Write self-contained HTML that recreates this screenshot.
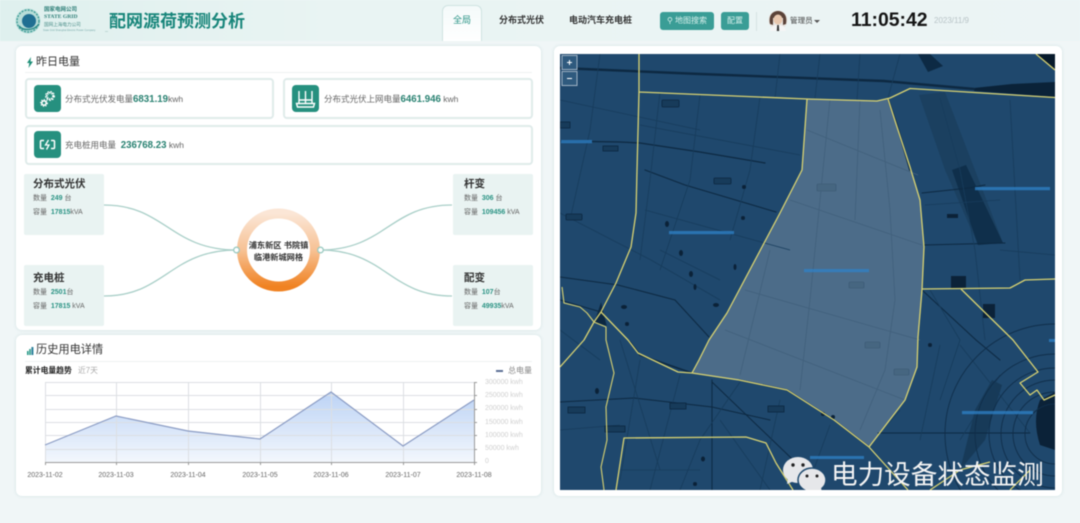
<!DOCTYPE html>
<html lang="zh"><head><meta charset="utf-8"><title>配网源荷预测分析</title>
<style>
*{box-sizing:border-box;margin:0;padding:0}
html,body{width:1080px;height:523px;overflow:hidden;background:#f0f6f7}
body{position:relative;font-family:"Liberation Sans","Noto Sans CJK SC",sans-serif;color:#333}
#root{position:absolute;inset:0;filter:blur(.45px)}
.a{position:absolute;white-space:nowrap;line-height:1}
.head{position:absolute;left:0;top:0;width:1080px;height:41px;background:linear-gradient(90deg,#dff0ee 0,#e9f4f3 30%,#ecf4f5 100%)}
.panel{position:absolute;background:#fff;border-radius:6px;box-shadow:0 0 3px rgba(150,190,190,.35)}
.card{position:absolute;background:#fff;border:2px solid #dfebea;border-radius:4px}
.ico{position:absolute;width:27px;height:27px;background:#26907f;border-radius:4px}
.txt{font-size:8.5px;color:#666}
.num{color:#2a8272;font-weight:700;font-size:9.7px}
.box{position:absolute;width:80px;height:61px;background:#e9f3f2;border-radius:2px}
.bt{font-size:10.5px;font-weight:700;color:#333}
.sm{font-size:7px;color:#666}
.sm b{color:#2b9384}
.btn{position:absolute;top:12px;height:18px;background:#3a9d96;border-radius:3px;color:#d8f0ec;font-size:8px;line-height:18px;text-align:center}
.yl{font-size:7px;color:#d0d0d0;left:485px}
.xl{font-size:7px;color:#666;top:472px;width:50px;text-align:center}
</style></head><body><div id="root">
<div class="head"></div>

<!-- logo -->
<svg class="a" style="left:14px;top:6px" width="30" height="30" viewBox="0 0 30 30">
<circle cx="14" cy="15" r="12.5" fill="#a5d4cf" opacity=".7"/>
<circle cx="14" cy="15" r="11" fill="none" stroke="#3f9d98" stroke-width="1.400" stroke-dasharray="2 1.200"/>
<circle cx="15" cy="15" r="7" fill="#1f6f92"/>
<path d="M5 20C9 25 20 25 25 18" fill="none" stroke="#2a8a88" stroke-width="1.500"/>
</svg>
<div class="a" style="left:44px;top:8px;font-size:5.500px;font-weight:700;color:#2e7f78">国家电网公司</div>
<div class="a" style="left:44px;top:15px;font-size:5.600px;font-weight:700;font-family:'Liberation Serif',serif;color:#2e7f78">STATE GRID</div>
<div class="a" style="left:44px;top:23px;font-size:4.600px;color:#4d8f8a">国网上海电力公司</div>
<div class="a" style="left:43px;top:30px;font-size:2.600px;color:#7aa">State Grid Shanghai Electric Power Company</div>
<div class="a" style="left:105px;top:31px;width:3px;height:1px;background:#bfd8d5"></div>
<div class="a" style="left:109px;top:13px;font-size:17px;font-weight:700;color:#17857a">配网源荷预测分析</div>

<!-- nav -->
<div class="a" style="left:442px;top:5px;width:40px;height:36px;background:linear-gradient(#f4fafa,#fff);border:1px solid #cfe3e1;border-bottom:0;border-radius:6px 6px 0 0"></div>
<div class="a" style="left:453px;top:16px;font-size:9px;color:#2a9486">全局</div>
<div class="a" style="left:499px;top:16px;font-size:9px;font-weight:700;color:#333">分布式光伏</div>
<div class="a" style="left:569px;top:16px;font-size:9px;font-weight:700;color:#333">电动汽车充电桩</div>
<div class="btn" style="left:660px;width:54px">⚲ 地图搜索</div>
<div class="btn" style="left:721px;width:28px">配置</div>
<div class="a" style="left:756px;top:12px;width:1px;height:19px;background:#d5e3e3"></div>
<svg class="a" style="left:768px;top:10px" width="20" height="22" viewBox="0 0 20 22">
<circle cx="10" cy="10" r="9.500" fill="#e9e4e0"/>
<path d="M2 14C0 4 6 1 10 1s10 3 8 13l-3 1V8H5v7z" fill="#5a4238"/>
<ellipse cx="10" cy="9.500" rx="4.500" ry="5" fill="#e8c7ae"/>
<path d="M2 21c1-5 4-6 8-6s7 1 8 6z" fill="#f5f5f5"/>
<path d="M9.200 15h1.600l.4 6H8.800z" fill="#333"/>
</svg>
<div class="a" style="left:790px;top:17px;font-size:7.600px;color:#444">管理员</div>
<div class="a" style="left:814px;top:20px;border:3px solid transparent;border-top:3px solid #555"></div>
<div class="a" style="left:851px;top:11px;font-size:19.400px;font-weight:700;color:#151515">11:05:42</div>
<div class="a" style="left:934px;top:17px;font-size:8px;color:#b8c4c6">2023/11/9</div>

<!-- panel 1 -->
<div class="panel" style="left:16px;top:46px;width:525px;height:284px"></div>
<svg class="a" style="left:27px;top:57px" width="6" height="11" viewBox="0 0 6 11"><path d="M4 0L0 6h2.300L1.500 11 6 4.500H3.500z" fill="#1f8f78"/></svg>
<div class="a" style="left:36px;top:57px;font-size:11px;color:#333">昨日电量</div>
<div class="a" style="left:25px;top:72px;width:507px;height:1px;background:#eef2f2"></div>

<div class="card" style="left:25px;top:78px;width:249px;height:41px"></div>
<div class="ico" style="left:34px;top:85px"></div>
<svg class="a" style="left:34px;top:85px" width="27" height="27" viewBox="0 0 27 27" fill="none" stroke="#fff">
<circle cx="16" cy="11" r="3.200" stroke-width="2" stroke-dasharray="1.500 .8"/><circle cx="16" cy="11" r="4.400" stroke-width="1.200" stroke-dasharray="1.500 1.500"/>
<circle cx="10" cy="18" r="2.200" stroke-width="1.600"/><circle cx="10" cy="18" r="3.400" stroke-width="1" stroke-dasharray="1.300 1.300"/>
</svg>
<div class="a txt" style="left:65px;top:95px">分布式光伏发电量<span class="num">6831.19</span>kwh</div>

<div class="card" style="left:283px;top:78px;width:250px;height:41px"></div>
<div class="ico" style="left:292px;top:85px"></div>
<svg class="a" style="left:292px;top:85px" width="27" height="27" viewBox="0 0 27 27" fill="none" stroke="#fff" stroke-width="1.400">
<path d="M7 6v12M13.500 6v12M20 6v12M7 15h13M4.500 18.500h18l-1 3.500h-16z"/>
</svg>
<div class="a txt" style="left:324px;top:95px">分布式光伏上网电量<span class="num">6461.946</span> kwh</div>

<div class="card" style="left:25px;top:125px;width:508px;height:40px"></div>
<div class="ico" style="left:34px;top:131px"></div>
<svg class="a" style="left:34px;top:131px" width="27" height="27" viewBox="0 0 27 27" fill="none" stroke="#fff" stroke-width="1.500">
<path d="M10 9.500H7.500q-1 0-1 1v6q0 1 1 1H10M17 9.500h2.500q1 0 1 1v6q0 1-1 1H17"/><path d="M14.500 9l-3 5h3.500l-2.500 4.500" stroke-width="1.300"/>
</svg>
<div class="a txt" style="left:65px;top:141px">充电桩用电量 &nbsp;<span class="num">236768.23</span> kwh</div>

<!-- mind map -->
<svg class="a" style="left:100px;top:170px" width="360" height="160" viewBox="100 170 360 160" fill="none">
<defs><linearGradient id="ring" x1="0" y1="0" x2="0" y2="1"><stop offset="0" stop-color="#fbe6d6"/><stop offset=".5" stop-color="#f7c295"/><stop offset="1" stop-color="#f08222"/></linearGradient></defs>
<g stroke="#a9cfc8" stroke-width="1.300">
<path d="M104 205C165 205 170 250 237 250"/>
<path d="M104 296C165 296 170 250 237 250"/>
<path d="M452 205C390 205 385 250 320 250"/>
<path d="M452 296C390 296 385 250 320 250"/>
</g>
<circle cx="278.500" cy="250" r="36.500" stroke="url(#ring)" stroke-width="10"/>
<circle cx="236.500" cy="250" r="2.800" fill="#fff" stroke="#9ccbc2" stroke-width="1.300"/>
<circle cx="320.500" cy="250" r="2.800" fill="#fff" stroke="#9ccbc2" stroke-width="1.300"/>
</svg>
<div class="a" style="left:238px;top:242px;width:81px;text-align:center;font-size:8.200px;font-weight:700;color:#333">浦东新区 书院镇</div>
<div class="a" style="left:238px;top:254px;width:81px;text-align:center;font-size:8.200px;font-weight:700;color:#333">临港新城网格</div>

<div class="box" style="left:24px;top:174px"></div>
<div class="a bt" style="left:33px;top:179px">分布式光伏</div>
<div class="a sm" style="left:33px;top:195px">数量 &nbsp;<b>249</b> 台</div>
<div class="a sm" style="left:33px;top:209px">容量 &nbsp;<b>17815</b>kVA</div>

<div class="box" style="left:24px;top:265px"></div>
<div class="a bt" style="left:33px;top:273px">充电桩</div>
<div class="a sm" style="left:33px;top:289px">数量 &nbsp;<b>2501</b>台</div>
<div class="a sm" style="left:33px;top:303px">容量 &nbsp;<b>17815</b> kVA</div>

<div class="box" style="left:453px;top:174px"></div>
<div class="a bt" style="left:464px;top:179px">杆变</div>
<div class="a sm" style="left:464px;top:195px">数量 &nbsp;<b>306</b> 台</div>
<div class="a sm" style="left:464px;top:209px">容量 &nbsp;<b>109456</b> kVA</div>

<div class="box" style="left:453px;top:265px"></div>
<div class="a bt" style="left:464px;top:273px">配变</div>
<div class="a sm" style="left:464px;top:289px">数量 &nbsp;<b>107</b>台</div>
<div class="a sm" style="left:464px;top:303px">容量 &nbsp;<b>49935</b>kVA</div>

<!-- panel 2 -->
<div class="panel" style="left:16px;top:335px;width:525px;height:161px"></div>
<svg class="a" style="left:27px;top:347px" width="7" height="8"><rect x="0" y="4" width="1.600" height="4" fill="#2a9a88"/><rect x="2.200" y="2" width="1.600" height="6" fill="#2a9a88"/><rect x="4.400" y="0" width="2" height="8" fill="#2a7f9a"/></svg>
<div class="a" style="left:36px;top:345px;font-size:11.200px;color:#333">历史用电详情</div>
<div class="a" style="left:25px;top:361px;width:507px;height:1px;background:#eef2f2"></div>
<div class="a" style="left:25px;top:367px;font-size:7.800px;font-weight:700;color:#222">累计电量趋势</div>
<div class="a" style="left:78px;top:367px;font-size:7.800px;color:#aaa">近7天</div>
<div class="a" style="left:496px;top:370px;width:7px;height:1.500px;background:#5b6f95"></div>
<div class="a" style="left:508px;top:367px;font-size:8px;color:#888">总电量</div>

<svg class="a" style="left:40px;top:378px" width="445" height="90" viewBox="40 378 445 90" fill="none">
<defs><linearGradient id="ar" x1="0" y1="0" x2="0" y2="1"><stop offset="0" stop-color="#bcd3f5"/><stop offset="1" stop-color="#f3f7fd"/></linearGradient></defs>
<path d="M45 445L116 416L188 431L260 439L331 392L403 446L474 400V462H45Z" fill="url(#ar)"/>
<g stroke="#dcdfe3" stroke-width="1">
<path d="M45 382.500H474M45 395.500H474M45 409.500H474M45 422.500H474M45 435.500H474M45 449.500H474"/>
<path d="M45.500 382V462M116.500 382V462M188.500 382V462M260.500 382V462M331.500 382V462M403.500 382V462"/>
</g>
<path d="M45 445L116 416L188 431L260 439L331 392L403 446L474 400" stroke="#8b9cc4" stroke-width="1.200"/>
<path d="M45 462.500H474M474.500 382V463" stroke="#9a9a9a" stroke-width="1"/>
<path d="M45.500 462v3M116.500 462v3M188.500 462v3M260.500 462v3M331.500 462v3M403.500 462v3M474.500 462v3M474 382.500h3M474 395.500h3M474 409.500h3M474 422.500h3M474 435.500h3M474 449.500h3M474 462.500h3" stroke="#9a9a9a"/>
</svg>
<div class="a yl" style="top:379px">300000 kwh</div>
<div class="a yl" style="top:392px">250000 kwh</div>
<div class="a yl" style="top:405px">200000 kwh</div>
<div class="a yl" style="top:419px">150000 kwh</div>
<div class="a yl" style="top:432px">100000 kwh</div>
<div class="a yl" style="top:445px">50000 kwh</div>
<div class="a yl" style="top:458px">0</div>
<div class="a xl" style="left:20px">2023-11-02</div>
<div class="a xl" style="left:91px">2023-11-03</div>
<div class="a xl" style="left:163px">2023-11-04</div>
<div class="a xl" style="left:235px">2023-11-05</div>
<div class="a xl" style="left:306px">2023-11-06</div>
<div class="a xl" style="left:378px">2023-11-07</div>
<div class="a xl" style="left:449px">2023-11-08</div>

<!-- map panel -->
<div class="panel" style="left:554px;top:46px;width:508px;height:450px"></div>
<svg class="a" style="left:560px;top:54px" width="495" height="436" viewBox="560 54 495 436" fill="none">
<rect x="560" y="54" width="495" height="436" fill="#1f486d"/>
<!-- water bands -->
<path d="M919 95L945 92L1003 243L978 245L945 170Z" fill="#1b4060"/>
<path d="M952 170L966 165L1003 243L978 245Z" fill="#0f2f4b"/>
<path d="M1036 54L1055 54L1055 70Z" fill="#071a2b"/>
<path d="M918 54L930 54L943 66L928 72Z" fill="#0d2a44"/>
<path d="M974 88L1012 84L1055 82V97L974 91Z" fill="#0a2238"/>
<path d="M1040 400L1055 392V450L1040 445Q1032 420 1040 400Z" fill="#0b2238"/>
<path d="M975 410L992 380L1002 385L985 440L960 470Z" fill="#173a58"/>
<!-- highlighted -->
<path d="M807 99L877 101L888 99L910 167L920 200L924 247L922 290L918 337L917 367L905 400L869 447L864 443L834 420L787 390L739 380L692 373L699 360L709 340L727 313L780 213L802 170Z" fill="#4c6c89"/>
<!-- main roads -->
<g stroke="#0d2942" stroke-linecap="round">
<path d="M560 68L700 74L884 81L974 89" stroke-width="2.400"/>
<path d="M561 141L620 142L640 143L700 152L765 163" stroke-width="1.200"/>
<path d="M645 170L685 185L776 212" stroke-width="1.100"/>
<path d="M922 193L969 188L985 185" stroke-width="1"/>
<path d="M924 245L1005 243" stroke-width="1"/>
<path d="M888 99L897 125L910 170" stroke-width="1.800"/>
<path d="M560 277L618 285L675 300L709 337" stroke-width="1"/>
<path d="M560 402L634 398L712 407L770 420" stroke-width="1"/>
<path d="M712 380V490M712 382L814 480" stroke-width="1"/>
<path d="M922 290L976 340L1000 360" stroke-width="1.100"/>
<path d="M878 433H1030" stroke-width="1"/>
<path d="M601 312L560 300" stroke-width="1"/>
<path d="M595 322L601 304L606 325Z" fill="#0c2740"/>
<path d="M692 373L640 355L630 342" stroke-width="1.700"/>
<path d="M739 380L787 390L834 420L869 447" stroke-width="1.600"/>
</g>
<!-- minor -->
<g stroke="#173c5c" stroke-width=".8">
<path d="M560 100L700 130M560 213L651 260L720 300M600 54L590 130L570 220M660 92L650 180L640 260M700 95L690 180L660 270M760 97L750 170L730 240M640 125L800 155M645 210L790 250M660 250L720 280"/>
<path d="M780 54L775 98M860 54L857 100M820 54L815 98M900 54L888 98M940 98L960 170L975 250L985 340M1000 250L1055 255M930 290L960 340L940 400M925 205L1000 200M1010 100L1020 280"/>
<path d="M560 330L600 360M620 340L660 470M640 360L620 480M680 375L650 490M740 382L700 440L680 490M560 430L620 425M620 470L700 470M720 420L770 490M780 400L760 490M830 425L810 480M900 410L880 433M940 345L920 440M960 345L1030 433M1000 375L960 440"/>
</g>
<g stroke="#41607c" stroke-width=".8">
<path d="M807 130L918 175M790 200L922 245M745 290L920 340M725 330L905 400M830 99L820 200L810 300L800 390M880 110L890 210L895 300L885 370L860 430M860 100L855 220M770 250L740 375"/>
</g>
<g stroke="#102e4a" stroke-width=".9">
<circle cx="1055" cy="434" r="30"/><circle cx="1055" cy="434" r="42"/><circle cx="1055" cy="434" r="54"/><circle cx="1055" cy="434" r="66"/><circle cx="1055" cy="434" r="80"/><circle cx="1055" cy="434" r="110"/>
</g>
<!-- blobs -->
<g fill="#0b2238">
<ellipse cx="667" cy="224" rx="2" ry="3"/><ellipse cx="681" cy="253" rx="2" ry="3"/><ellipse cx="691" cy="274" rx="2" ry="3"/><ellipse cx="695" cy="287" rx="1.500" ry="3"/><ellipse cx="735" cy="267" rx="1.500" ry="3"/><ellipse cx="624" cy="307" rx="3" ry="2"/><ellipse cx="716" cy="305" rx="3" ry="2"/><ellipse cx="627" cy="324" rx="2" ry="2"/><ellipse cx="743" cy="218" rx="2" ry="2"/><ellipse cx="744" cy="187" rx="2" ry="2"/>
<rect x="951" y="276" width="15" height="13"/><rect x="983" y="304" width="12" height="14"/><rect x="947" y="214" width="11" height="4"/>
<ellipse cx="597" cy="391" rx="2" ry="3"/><ellipse cx="703" cy="459" rx="2" ry="2.500"/><ellipse cx="695" cy="484" rx="2" ry="2"/><ellipse cx="823" cy="414" rx="2" ry="2"/><ellipse cx="833" cy="417" rx="2" ry="2"/><ellipse cx="930" cy="345" rx="2" ry="2"/>
</g>
<g fill="#466681" stroke="#3a5873" stroke-width=".6"><rect x="817" y="184" width="19" height="7" rx="1"/><rect x="849" y="282" width="15" height="6" rx="1"/><rect x="865" y="342" width="15" height="6" rx="1"/><rect x="894" y="369" width="15" height="6" rx="1"/></g>
<g fill="#173b5a" stroke="#0c2740" stroke-width=".8"><rect x="662" y="100" width="17" height="7" rx="1"/><rect x="714" y="178" width="17" height="6" rx="1"/><rect x="566" y="214" width="16" height="6" rx="1"/><rect x="560" y="122" width="10" height="6"/><rect x="603" y="146" width="15" height="5"/><rect x="568" y="407" width="17" height="6"/><rect x="605" y="426" width="20" height="6"/><rect x="670" y="403" width="16" height="6"/><rect x="768" y="406" width="16" height="6"/></g>
<!-- yellow boundaries -->
<g stroke="#d8d272" stroke-width="1.300" stroke-linejoin="round">
<path d="M639 54V92L807 99L877 101L890 98L910 88.500L1055 97.500"/>
<path d="M639 92L637 170L636 213L631 247L616 283L601 312L594 322L584 340L560 367"/>
<path d="M807 99L802 170L780 213L727 313L709 340L699 360L692 373L739 380L787 390L834 420L869 447L888 468L908 490"/>
<path d="M888 99L910 167L920 200L924 247L922 290L918 337L917 367L905 400L869 447"/>
<path d="M692 373L678 372L638 353L628 340L601 312"/>
<path d="M922 289L1010 288L1025 280L1055 279"/>
<path d="M961 289L1013 340L1038 372L1020 383L1030 395L1037 390L1044 400L1055 395"/>
<path d="M616 490L624 438L746 437L766 443L776 463L793 490"/>
<path d="M562 287L564 303L580 307L587 313L594 322L606 327L606 340L614 373L606 407L607 440L601 467L604 490" stroke-width="1.100"/>
<path d="M1036 54L1055 70"/>
<path d="M930 490L960 470L990 462M1010 490L1030 470"/>
</g>
<!-- blue labels -->
<g fill="#2f82c8" opacity=".75">
<rect x="669" y="231" width="65" height="3.200"/><rect x="804" y="269" width="65" height="3.200"/><rect x="975" y="187" width="75" height="3.200"/><rect x="561" y="140" width="31" height="3.200"/><rect x="962" y="411" width="71" height="3.200"/><rect x="810" y="456" width="54" height="3"/><rect x="1049" y="339" width="6" height="3"/>
</g>
<!-- zoom -->
<g stroke="#9fb2c4" fill="#2f5a7e"><rect x="562" y="55.500" width="15" height="14"/><rect x="562" y="71.500" width="15" height="14"/></g>
<path d="M567 62.500h5M569.500 60v5M567 78.500h5" stroke="#fff" stroke-width="1"/>
<!-- wechat -->
<g>
<ellipse cx="798" cy="470" rx="15" ry="13" fill="#e6e7ea"/><path d="M788 478l-1 6 7-3z" fill="#e6e7ea"/>
<circle cx="793" cy="465" r="1.700" fill="#222"/><circle cx="803" cy="465" r="1.700" fill="#222"/>
<ellipse cx="812" cy="480" rx="14" ry="12" stroke="#1f4a6f" stroke-width="1.500" fill="#e6e7ea"/><path d="M816 490l6 4-1-7z" fill="#e6e7ea"/>
<circle cx="807" cy="476" r="1.500" fill="#222"/><circle cx="817" cy="476" r="1.500" fill="#222"/>
</g>
</svg>
<div class="a" style="left:831px;top:462px;font-size:26.600px;color:#f4f4f4">电力设备状态监测</div>
</div></body></html>
